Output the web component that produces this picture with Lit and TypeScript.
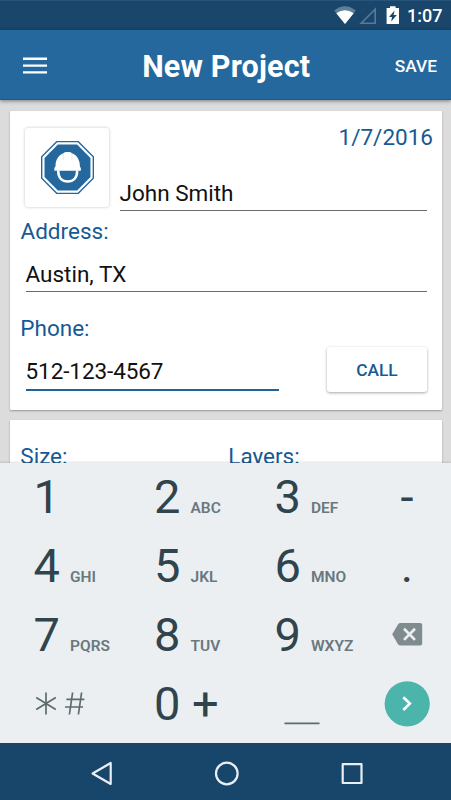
import { LitElement, html, css } from "lit";
import { customElement, property } from "lit/decorators.js";

@customElement("status-bar")
class StatusBar extends LitElement {
  static styles = css`
    :host {
      display: flex;
      height: 30px;
      box-sizing: border-box;
      justify-content: flex-end;
      background: #19466a;
      border-top: 1px solid #27547a;
      color: #fff;
    }
    .icons {
      width: 70px;
      height: 29px;
      margin-right: 3px;
    }
    .time {
      width: 44px;
      font-size: 18px;
      font-weight: 500;
      line-height: 30px;
      white-space: nowrap;
    }
  `;
  render() {
    return html`
      <svg class="icons" viewBox="334 1 70 29">
        <path d="M345 24 L334.2 10.6 Q345 2 355.8 10.6 Z" fill="#5e7f9a" />
        <path d="M345 24 L336.3 13.2 Q345 7.1 353.7 13.2 Z" fill="#fff" />
        <path d="M361.2 23.2 H375.2 V9.2 Z" fill="none" stroke="#5a7993" stroke-width="1.6" />
        <path
          d="M386.6 8 H390 V6.2 H395.6 V8 H399 V24 H386.6 Z"
          fill="#fff"
        />
        <path d="M394.6 10.4 L389 16.9 H392 L391.2 21.4 L396.8 14.9 H393.6 Z" fill="#19466a" />
      </svg>
      <span class="time">1:07</span>
    `;
  }
}

@customElement("app-bar")
class AppBar extends LitElement {
  static styles = css`
    :host {
      display: grid;
      grid-template-columns: 120px 1fr 120px;
      align-items: center;
      height: 70px;
      box-sizing: border-box;
      border-bottom: 1px solid #175b90;
      background: #25689d;
      color: #fff;
      box-shadow: 0 1px 4px rgba(0, 0, 0, 0.45);
      position: relative;
      z-index: 1;
    }
    .menu {
      width: 24px;
      height: 17px;
      margin: 1px 0 0 23px;
    }
    .title {
      margin: 5px 0 0 1.5px;
      font-size: 30.5px;
      line-height: 36px;
      letter-spacing: 0.18px;
      font-weight: 700;
      text-align: center;
      white-space: nowrap;
    }
    .save {
      margin: 3px 14px 0 0;
      font-size: 17.3px;
      font-weight: 500;
      text-align: right;
    }
  `;
  render() {
    return html`
      <svg class="menu" viewBox="0 0 24 17">
        <path d="M0 1.7H24M0 8.6H24M0 15.4H24" stroke="#fff" stroke-width="2.4" />
      </svg>
      <span class="title">New Project</span>
      <span class="save">SAVE</span>
    `;
  }
}

@customElement("project-form")
class ProjectForm extends LitElement {
  static styles = css`
    :host {
      display: flex;
      flex-direction: column;
      gap: 10px;
      height: 363px;
      box-sizing: border-box;
      padding: 10.5px 9px 0 10px;
      overflow: hidden;
      background: #dcdcdc;
      font-size: 22.5px;
      line-height: 28px;
    }
    .card {
      flex: none;
      background: #fff;
      border-radius: 1px;
      box-shadow: 0 1px 2px rgba(0, 0, 0, 0.32);
    }
    .details {
      height: 299px;
    }
    .extras {
      height: 120px;
      display: grid;
      grid-template-columns: 208px 1fr;
      padding: 22px 0 0 10.3px;
      box-sizing: border-box;
    }
    .head {
      display: flex;
      padding: 17.5px 0 0 15px;
    }
    .badge {
      display: flex;
      align-items: center;
      justify-content: center;
      width: 84px;
      height: 79px;
      border-radius: 3px;
      box-shadow: 0 0 3px rgba(0, 0, 0, 0.25);
    }
    .badge svg {
      width: 53px;
      height: 53px;
      margin-left: 1px;
    }
    .who {
      flex: 1;
      margin: -5.5px 0 0 10.5px;
    }
    .date {
      padding-right: 9px;
      text-align: right;
    }
    .label,
    .date {
      color: #155a94;
      white-space: nowrap;
    }
    .field {
      box-sizing: border-box;
      color: #111;
      border-bottom: 1px solid #6b6b6b;
    }
    .name {
      height: 32px;
      margin: 28.5px 15px 0 0;
    }
    .address-label {
      margin: 6px 0 0 10.5px;
    }
    .address {
      height: 32px;
      margin: 15px 15px 0 15.5px;
    }
    .phone-label {
      margin: 22px 0 0 10.3px;
    }
    .phone-row {
      display: flex;
      justify-content: space-between;
      align-items: flex-start;
      margin: 4.5px 15px 0 15.5px;
    }
    .phone {
      width: 253.5px;
      height: 33.5px;
      margin-top: 10.5px;
      line-height: 29px;
      letter-spacing: -0.08px;
      border-bottom: 2.5px solid #20639b;
    }
    .call {
      width: 100px;
      height: 45px;
      border-radius: 3px;
      box-shadow: 0 1px 3px rgba(0, 0, 0, 0.35);
      color: #155a94;
      font-size: 17.3px;
      font-weight: 500;
      line-height: 46px;
      text-align: center;
    }
  `;
  render() {
    return html`
      <section class="card details">
        <div class="head">
          <div class="badge">
            <svg viewBox="0 0 54 54">
              <path d="M16 .7H38L53.3 16V38L38 53.3H16L.7 38V16Z" fill="#fff" stroke="#25689d" stroke-width="1.4" />
              <path d="M17.2 3.6H36.8L50.4 17.2V36.8L36.8 50.4H17.2L3.6 36.8V17.2Z" fill="#25689d" />
              <path
                d="M13.6 30.4V27.2C14.4 26.8 14.8 26 14.8 24.6C15 19 18 14.2 23 12.5C23.2 11.6 25 11.2 27.2 11.2S31.2 11.6 31.4 12.5C36.4 14.2 39.4 19 39.6 24.6C39.6 26 40 26.8 40.6 27.2V30.4Z"
                fill="#fff"
              />
              <path d="M17.6 30V31C17.6 37.4 21.6 41.2 27.2 41.2S36.8 37.4 36.8 31V30" fill="none" stroke="#fff" stroke-width="2.6" />
              <path d="M22.8 13V19.5M31.6 13V19.5" stroke="#d5e0ea" stroke-width=".7" />
            </svg>
          </div>
          <div class="who">
            <div class="date">1/7/2016</div>
            <div class="field name">John Smith</div>
          </div>
        </div>
        <div class="label address-label">Address:</div>
        <div class="field address">Austin, TX</div>
        <div class="label phone-label">Phone:</div>
        <div class="phone-row">
          <div class="field phone">512-123-4567</div>
          <div class="call">CALL</div>
        </div>
      </section>
      <section class="card extras">
        <div class="label">Size:</div>
        <div class="label">Layers:</div>
      </section>
    `;
  }
}

@customElement("digit-key")
class DigitKey extends LitElement {
  @property() digit = "";
  @property() letters = "";
  static styles = css`
    :host {
      display: flex;
      align-items: baseline;
      line-height: 67px;
      white-space: nowrap;
    }
    .digit {
      width: 36.5px;
      font-size: 47px;
      color: #2f444c;
    }
    .letters {
      font-size: 15.5px;
      font-weight: 600;
      color: #6a787d;
    }
    .plus {
      padding-left: 1.5px;
      font-size: 47px;
      color: #2f444c;
    }
  `;
  render() {
    return html`<span class="digit">${this.digit}</span
      ><span class=${this.letters === "+" ? "plus" : "letters"}>${this.letters}</span>`;
  }
}

@customElement("number-pad")
class NumberPad extends LitElement {
  static styles = css`
    :host {
      display: grid;
      grid-template-columns: 120.5px 120.5px 88.5px 88px;
      grid-template-rows: repeat(4, 69px);
      height: 280px;
      box-sizing: border-box;
      padding-left: 33.5px;
      background: #ebeff2;
      box-shadow: 0 -1px 2px rgba(0, 0, 0, 0.12);
      position: relative;
    }
    .side {
      display: flex;
      justify-content: center;
      line-height: 67px;
      font-size: 47px;
      color: #2f444c;
    }
    svg {
      width: 88px;
      height: 69px;
    }
    .symbols {
      fill: none;
      stroke: #5c6b70;
      stroke-width: 1.7;
    }
  `;
  render() {
    return html`
      <digit-key digit="1"></digit-key>
      <digit-key digit="2" letters="ABC"></digit-key>
      <digit-key digit="3" letters="DEF"></digit-key>
      <span class="side">-</span>
      <digit-key digit="4" letters="GHI"></digit-key>
      <digit-key digit="5" letters="JKL"></digit-key>
      <digit-key digit="6" letters="MNO"></digit-key>
      <span class="side">.</span>
      <digit-key digit="7" letters="PQRS"></digit-key>
      <digit-key digit="8" letters="TUV"></digit-key>
      <digit-key digit="9" letters="WXYZ"></digit-key>
      <svg viewBox="363 601 88 69">
        <path d="M400.5 623H420.2Q422.2 623 422.2 625V643.6Q422.2 645.6 420.2 645.6H400.5Q399 645.6 398 644.2L392.2 634.3L398 624.4Q399 623 400.5 623Z" fill="#7f8b8f" />
        <path d="M404 628.7L415 639.9M415 628.7L404 639.9" stroke="#ebeff2" stroke-width="2.7" />
      </svg>
      <svg class="symbols" viewBox="34 669.5 88 69">
        <path d="M46 692V714M36.2 697L55.8 709M55.8 697L36.2 709" />
        <path d="M72.6 692L69.4 714M81.6 692L78.4 714M66.4 698.8H84.4M65 706.5H83" />
      </svg>
      <digit-key digit="0" letters="+"></digit-key>
      <svg class="symbols" viewBox="274.5 670 88 69">
        <path d="M284 723.3H319" />
      </svg>
      <svg viewBox="363 670 88 69">
        <circle cx="407.2" cy="703.8" r="22.6" fill="#4bb5ac" />
        <path d="M403.3 697.2L409.8 703.6L403.3 710" fill="none" stroke="#fff" stroke-width="2.7" />
      </svg>
    `;
  }
}

@customElement("nav-bar")
class NavBar extends LitElement {
  static styles = css`
    :host {
      display: block;
      height: 57px;
      box-sizing: border-box;
      border-top: 1px solid #2a4255;
      background: #18466b;
    }
    svg {
      display: block;
      width: 451px;
      height: 56px;
    }
  `;
  render() {
    return html`
      <svg viewBox="0 744 451 56" fill="none" stroke="#e9eef5" stroke-width="2.2" stroke-linejoin="round">
        <path d="M110.7 763V784L92.6 773.5Z" />
        <circle cx="226.8" cy="773.5" r="10.8" />
        <rect x="342.7" y="764.2" width="18.8" height="18.8" />
      </svg>
    `;
  }
}

@customElement("app-root")
class AppRoot extends LitElement {
  static styles = css`
    :host {
      display: flex;
      flex-direction: column;
      width: 451px;
      height: 800px;
      overflow: hidden;
      font-family: Roboto, "Liberation Sans", sans-serif;
    }
  `;
  render() {
    return html`
      <status-bar></status-bar>
      <app-bar></app-bar>
      <project-form></project-form>
      <number-pad></number-pad>
      <nav-bar></nav-bar>
    `;
  }
}
